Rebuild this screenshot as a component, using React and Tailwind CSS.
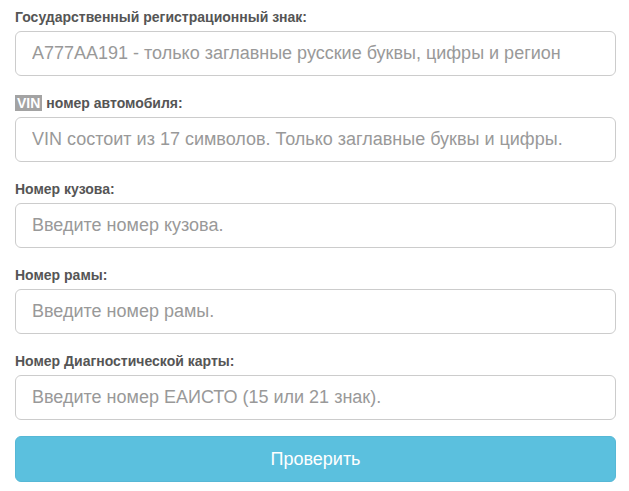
import React from "react";

const fields = [
  {
    id: "regnum",
    label: "Государственный регистрационный знак:",
    placeholder: "А777АА191 - только заглавные русские буквы, цифры и регион",
  },
  {
    id: "vin",
    vin: true,
    label: "номер автомобиля:",
    placeholder: "VIN состоит из 17 символов. Только заглавные буквы и цифры.",
  },
  { id: "body", label: "Номер кузова:", placeholder: "Введите номер кузова." },
  { id: "frame", label: "Номер рамы:", placeholder: "Введите номер рамы." },
  {
    id: "eaisto",
    label: "Номер Диагностической карты:",
    placeholder: "Введите номер ЕАИСТО (15 или 21 знак).",
  },
];

const App = () => {
  return (
    <div
      className="min-h-screen bg-white pl-[15px] pr-[13px] pt-[8px]"
      style={{ fontFamily: '"Liberation Sans", Arial, sans-serif' }}
    >
      {fields.map((f) => (
        <div key={f.id} className="mb-[18px]">
          <label
            htmlFor={f.id}
            className="block h-[18px] leading-[18px] mb-[5px] text-[14px] font-bold text-[#555]"
          >
            {f.vin && (
              <span className="bg-[#a3a3a3] text-white px-[2px] mr-[4px]">VIN</span>
            )}
            {f.label}
          </label>
          <input
            id={f.id}
            type="text"
            placeholder={f.placeholder}
            className="block w-full h-[45px] px-[16px] text-[18px] text-[#555] bg-white border border-[#ccc] rounded-[6px] placeholder:text-[#999] outline-none"
          />
        </div>
      ))}
      <button className="block w-full h-[46px] -mt-[2px] bg-[#5bc0de] border border-[#56b8d6] rounded-[6px] text-white text-[18px]">
        Проверить
      </button>
    </div>
  );
};

export default App;
